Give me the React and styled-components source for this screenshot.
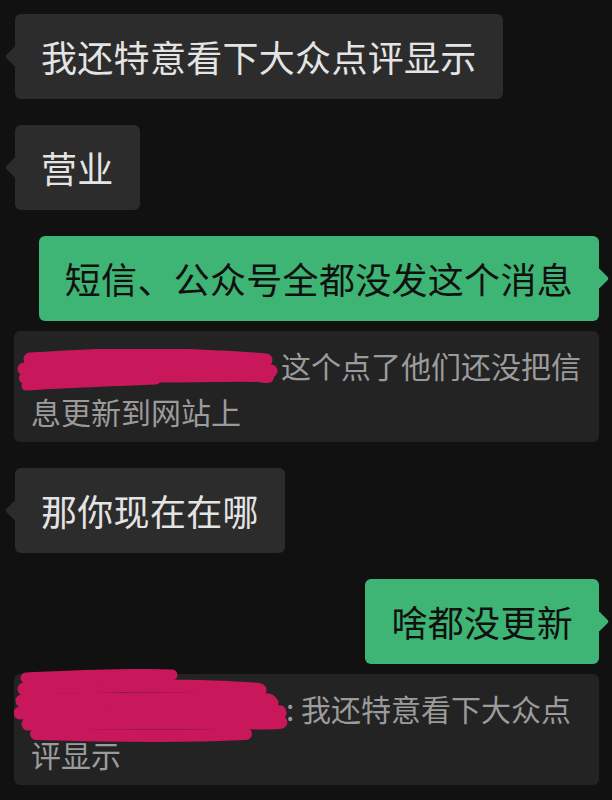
import React from "react";
import styled, { createGlobalStyle, css } from "styled-components";

const GlobalStyle = createGlobalStyle`
  html, body {
    margin: 0;
    padding: 0;
    background: #111111;
  }
  body {
    font-family: "Noto Sans CJK SC", "Noto Sans", sans-serif;
  }
`;

const messages = [
  { id: 1, side: "left", text: "我还特意看下大众点评显示" },
  { id: 2, side: "left", text: "营业" },
  {
    id: 3,
    side: "right",
    text: "短信、公众号全都没发这个消息",
    quote: { mark: 1, colon: "", text: "这个点了他们还没把信息更新到网站上" },
  },
  { id: 4, side: "left", text: "那你现在在哪" },
  {
    id: 5,
    side: "right",
    text: "啥都没更新",
    quote: { mark: 2, colon: ": ", text: "我还特意看下大众点评显示" },
  },
];

// hand scribbles hiding the quoted names
const Scribble = ({ mark }) =>
  mark === 1 ? (
    <MarkSvg width="262" height="46" viewBox="0 0 262 46" $left={-15} $top={1}>
      <g fill="none" stroke="#c8175b" strokeLinecap="round" strokeLinejoin="round">
        <path d="M14 10 C70 7 110 4 160 6 S230 9 250 11" strokeWidth="13" />
        <path d="M8 20 C60 17 130 18 180 17 S240 20 255 22" strokeWidth="13" />
        <path d="M9 29 C70 27 140 28 200 27 S240 28 252 28" strokeWidth="12" />
        <path d="M10 37 C40 35 90 33 140 31" strokeWidth="9" />
      </g>
    </MarkSvg>
  ) : (
    <MarkSvg width="282" height="82" viewBox="0 0 282 82" $left={-17} $top={-22}>
      <g fill="none" stroke="#c8175b" strokeLinecap="round" strokeLinejoin="round">
        <path d="M12 9 C60 7 110 4 158 6" strokeWidth="11" />
        <path d="M10 20 C70 17 150 16 200 18 S240 20 246 21" strokeWidth="13" />
        <path d="M8 32 C80 29 160 30 215 30 S252 32 258 34" strokeWidth="13" />
        <path d="M6 44 C80 42 170 42 225 42 S262 43 266 44" strokeWidth="13" />
        <path d="M14 55 C90 54 180 54 235 54 S256 52 260 53" strokeWidth="13" />
        <path d="M22 65 C90 67 170 68 232 65" strokeWidth="12" />
      </g>
    </MarkSvg>
  );

const App = () => (
  <>
    <GlobalStyle />
    <Chat>
      {messages.map((m) => (
        <Group key={m.id} $side={m.side}>
          <Bubble $side={m.side}>{m.text}</Bubble>
          {m.quote && (
            <Quote>
              <Redacted $w={m.quote.mark === 1 ? 250 : 255}>
                <Scribble mark={m.quote.mark} />
              </Redacted>
              {m.quote.colon}
              {m.quote.text}
            </Quote>
          )}
        </Group>
      ))}
    </Chat>
  </>
);

export default App;

const Chat = styled.div`
  display: flex;
  flex-direction: column;
  gap: 26px;
  padding: 14px 13px 0 15px;
`;

const Group = styled.div`
  display: flex;
  flex-direction: column;
  align-items: ${({ $side }) => ($side === "right" ? "flex-end" : "flex-start")};
  gap: 10px;
`;

const Bubble = styled.div`
  position: relative;
  padding: 17px 26px;
  font-size: 36px;
  letter-spacing: 0.3px;
  line-height: 51px;
  border-radius: 6px;
  white-space: nowrap;
  ${({ $side }) =>
    $side === "right"
      ? css`
          background: #3eb575;
          color: #101010;
        `
      : css`
          background: #2c2c2c;
          color: #e4e4e4;
        `}

  &::before {
    content: "";
    position: absolute;
    top: 50%;
    width: 15px;
    height: 15px;
    margin-top: -7.5px;
    border-radius: 2px;
    background: inherit;
    transform: rotate(45deg);
    ${({ $side }) => ($side === "right" ? "right: -7px;" : "left: -7px;")}
  }
`;

const Quote = styled.div`
  align-self: stretch;
  margin-left: -1px;
  padding: 11px 8px 8px 17px;
  background: #232323;
  border-radius: 6px;
  color: #9b9b9b;
  font-size: 30px;
  line-height: 46px;
`;

const Redacted = styled.span`
  position: relative;
  display: inline-block;
  width: ${({ $w }) => $w}px;
  height: 1em;
`;

const MarkSvg = styled.svg`
  position: absolute;
  left: ${({ $left }) => $left}px;
  top: ${({ $top }) => $top}px;
  z-index: 1;
`;
